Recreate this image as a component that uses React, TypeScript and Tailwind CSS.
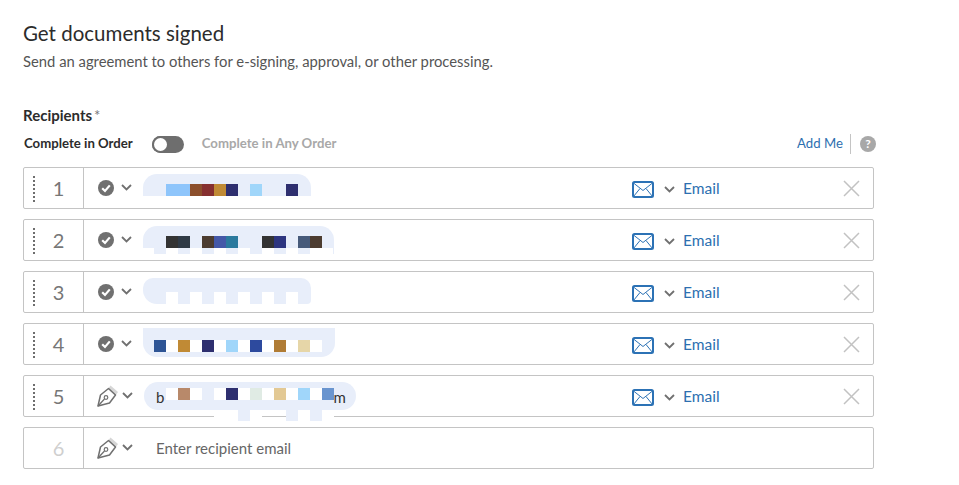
const font = "font-['Lato',sans-serif]";

const swatches: Record<string, string> = {
  '.': 'bg-transparent',
  w: 'bg-white',
  p: 'bg-[#e8eefa]',
  a: 'bg-[#8ec5fb]',
  b: 'bg-[#8c4f2c]',
  c: 'bg-[#863030]',
  d: 'bg-[#c08a35]',
  e: 'bg-[#2e2f6f]',
  f: 'bg-[#a0d6fa]',
  g: 'bg-[#333333]',
  h: 'bg-[#2f3a46]',
  i: 'bg-[#4c3c30]',
  j: 'bg-[#4458a8]',
  k: 'bg-[#2b7a9e]',
  l: 'bg-[#2d3580]',
  m: 'bg-[#465a7a]',
  n: 'bg-[#2f5595]',
  o: 'bg-[#2d4a9e]',
  q: 'bg-[#b07c35]',
  r: 'bg-[#e6d6a8]',
  s: 'bg-[#b8896a]',
  t: 'bg-[#e0ebe4]',
  u: 'bg-[#e3c994]',
  v: 'bg-[#6a95cf]',
};

function Cells({ map, className = '' }: { map: string; className?: string }) {
  return (
    <div className={`flex ${className}`}>
      {map.split('').map((c, i) => (
        <span key={i} className={`h-3 w-3 shrink-0 ${swatches[c]}`} />
      ))}
    </div>
  );
}

function CheckIcon() {
  return (
    <svg width="16" height="16" viewBox="0 0 16 16">
      <circle cx="8" cy="8" r="8" fill="#707070" />
      <path d="M4.2 8.2 7 11 11.8 5.4" fill="none" stroke="#fff" strokeWidth="2.2" />
    </svg>
  );
}

function PenIcon() {
  return (
    <svg width="22" height="22" viewBox="0 0 22 22" fill="none">
      <path d="M13.5 .5 21 7 18.5 10.5 11 4Z" fill="#d6d6d6" />
      <path
        d="M1 21 3.5 10 11.5 3.5 18.5 10 12.5 18Z"
        stroke="#707070"
        strokeWidth="1.5"
        strokeLinejoin="round"
      />
      <path d="M1 21 7.5 14" stroke="#707070" strokeWidth="1.3" />
      <circle cx="9" cy="12.5" r="1.8" stroke="#707070" strokeWidth="1.2" />
    </svg>
  );
}

function Chevron() {
  return (
    <svg width="11" height="7" viewBox="0 0 11 7" fill="none">
      <path d="M1 1 5.5 5.5 10 1" stroke="#707070" strokeWidth="1.8" />
    </svg>
  );
}

function MailIcon() {
  return (
    <svg width="22" height="17" viewBox="0 0 22 17" fill="none">
      <rect x="1" y="1" width="20" height="15" rx="1.5" fill="#fff" stroke="#2c72b5" strokeWidth="2" />
      <path d="M1.5 2 11 9.5 20.5 2M1.5 15.5 8 7.5M20.5 15.5 14 7.5" stroke="#2c72b5" strokeWidth="1" />
    </svg>
  );
}

function CloseIcon() {
  return (
    <svg width="17" height="17" viewBox="0 0 17 17" fill="none">
      <path d="M1 1 16 16M16 1 1 16" stroke="#c2c2c2" strokeWidth="1.5" />
    </svg>
  );
}

function Pill1() {
  return (
    <div className="ml-[59px] mt-[6px] h-[22px] w-[168px] self-start rounded-t-[14px] bg-[#e8eefa] pl-[23px] pt-[10px]">
      <Cells map="aabcde.f..e" />
    </div>
  );
}

function Pill2() {
  return (
    <div className="ml-[59px] mt-[6px] h-[28px] w-[191px] self-start rounded-t-[14px] bg-[#e8eefa] pl-[23px] pt-[10px]">
      <Cells map="gh.ijk..gl.mi" />
      <Cells map="wpwpwpwpwpwpwpwww" className="-ml-[24px] h-[6px] w-[191px] overflow-hidden" />
    </div>
  );
}

function Pill3() {
  return (
    <div className="ml-[59px] mt-[6px] h-[26px] w-[168px] self-start rounded-t-[10px] rounded-br-[4px] rounded-bl-[14px] bg-[#e8eefa] pl-[23px] pt-[14px]">
      <Cells map="w.w.w.w.w.w" />
    </div>
  );
}

function Pill4() {
  return (
    <div className="ml-[59px] mt-[4px] h-[29px] w-[192px] self-start rounded-b-[14px] bg-[#e8eefa] pl-[11px] pt-[12px]">
      <Cells map="nwdwewfwowqwrw" />
    </div>
  );
}

function Pill5() {
  return (
    <div className="ml-[60px] mt-[6px] w-[212px] self-start">
      <div className="flex h-[28px] items-start rounded-[14px] bg-[#e8eefa] pl-[12px]">
        <span className="mt-[5px] text-[15px] leading-5 text-[#333]">b</span>
        <Cells map="wswpwewtwuwfwv" className="ml-[2px] mt-[6px]" />
        <span className="-ml-[1px] mt-[5px] text-[15px] leading-5 text-[#333]">m</span>
      </div>
      <Cells map="....wwpw..pwpw" className="ml-[22px] h-2 overflow-hidden" />
      <Cells map="......p...p.p." className="ml-[22px] h-[3px] overflow-hidden" />
    </div>
  );
}

const rows = [
  { n: 1, pill: <Pill1 />, signed: true },
  { n: 2, pill: <Pill2 />, signed: true },
  { n: 3, pill: <Pill3 />, signed: true },
  { n: 4, pill: <Pill4 />, signed: true },
  { n: 5, pill: <Pill5 />, signed: false },
];

function RowIcon({ signed }: { signed: boolean }) {
  return (
    <div className="flex h-full w-[59px] shrink-0 items-center">
      <div className={signed ? 'ml-[14px] flex items-center' : 'ml-[13px] flex items-center'}>
        {signed ? <CheckIcon /> : <PenIcon />}
      </div>
      <div className={signed ? 'mb-[2px] ml-[7px]' : 'mb-[2px] ml-[3px]'}>
        <Chevron />
      </div>
    </div>
  );
}

function Recipient({ n, pill, signed }: { n: number; pill: React.ReactNode; signed: boolean }) {
  return (
    <div className="flex h-[42px] w-[851px] items-stretch rounded-[2px] border border-[#c4c4c4]">
      <div className="relative flex w-[60px] shrink-0 items-center justify-center border-r border-[#c4c4c4] pl-[10px] text-[20px] font-normal text-[#777]">
        <span className="absolute left-[9px] top-[8px] h-[26px] border-l-2 border-dotted border-[#6e6e6e]" />
        {n}
      </div>
      <div className="relative flex min-w-0 flex-1 items-stretch">
        <div className="absolute left-0 top-0 h-full">
          <RowIcon signed={signed} />
        </div>
        {pill}
        <div className="ml-auto flex items-center">
          <span className="mt-[2px] flex">
            <MailIcon />
          </span>
          <span className="ml-[10px] mt-[2px]">
            <Chevron />
          </span>
          <span className="ml-2 mt-[1px] w-[37px] text-[15.5px] text-[#2d6fb0]">Email</span>
          <span className="ml-[123px] mr-[13px] mt-[1px] flex">
            <CloseIcon />
          </span>
        </div>
      </div>
    </div>
  );
}

export default function App() {
  return (
    <div className={`${font} h-[485px] w-[959px] overflow-hidden bg-white pl-[23px] pt-[19px]`}>
      <h1 className="text-[20.5px] leading-7 font-normal text-[#2c2c2c]">Get documents signed</h1>
      <p className="mt-[4px] text-[14.8px] leading-5 text-[#555]">
        Send an agreement to others for e-signing, approval, or other processing.
      </p>

      <div className="mt-[34px] flex items-baseline text-[15px] leading-5 font-bold text-[#2c2c2c]">
        Recipients<span className="ml-[2px] font-normal text-[#777]">*</span>
      </div>

      <div className="mt-[9px] flex h-[20px] w-[853px] items-center text-[13.2px]">
        <span className="ml-[1px] font-bold text-[#2c2c2c]">Complete in Order</span>
        <span className="ml-[19px] flex h-[17px] w-[32px] items-center rounded-full bg-[#6e6e6e]">
          <span className="h-[17px] w-[17px] rounded-full border-2 border-[#6e6e6e] bg-white" />
        </span>
        <span className="ml-[18px] font-bold text-[#a8a8a8]">Complete in Any Order</span>
        <span className="ml-auto text-[13.2px] text-[#2d6fb0]">Add Me</span>
        <span className="mx-[7px] h-[20px] border-l border-[#c4c4c4]" />
        <span className="ml-[2px] flex h-4 w-4 items-center justify-center rounded-full bg-[#a8a8a8] text-[12px] leading-none font-bold text-white">
          ?
        </span>
      </div>

      <div className="mt-[13px] flex flex-col gap-[10px]">
        {rows.map((r) => (
          <Recipient key={r.n} n={r.n} pill={r.pill} signed={r.signed} />
        ))}
        <div className="flex h-[42px] w-[851px] items-stretch rounded-[2px] border border-[#c4c4c4]">
          <div className="flex w-[60px] shrink-0 items-center justify-center border-r border-[#c4c4c4] pl-[10px] text-[20px] font-normal text-[#cfcfcf]">
            6
          </div>
          <RowIcon signed={false} />
          <div className="ml-[13px] flex items-center text-[15px] text-[#666]">Enter recipient email</div>
        </div>
      </div>
    </div>
  );
}
